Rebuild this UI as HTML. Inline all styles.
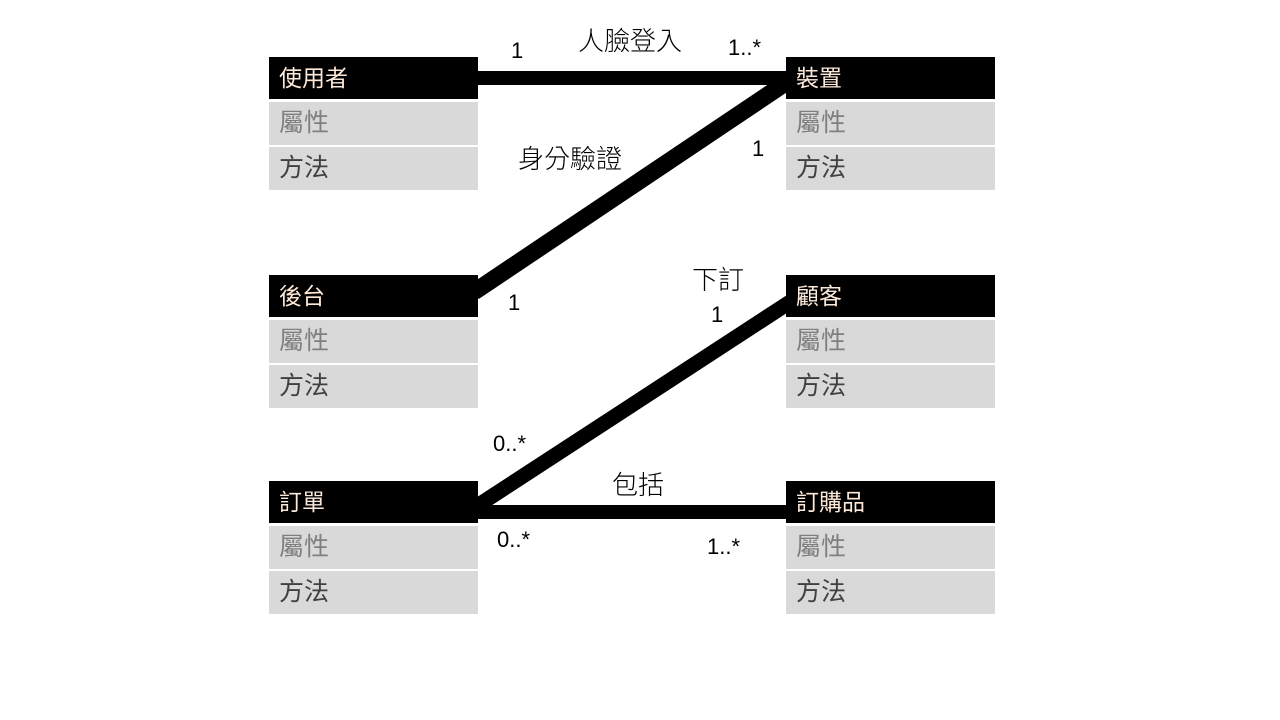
<!DOCTYPE html>
<html><head><meta charset="utf-8"><style>
body{margin:0;width:1280px;height:720px;background:#fff;position:relative;overflow:hidden;font-family:"Liberation Sans","Noto Sans CJK TC",sans-serif}
.b{position:absolute;width:209px}
.h{position:absolute;left:0;width:209px;height:42px;background:#000;color:#fde9d9;font-size:23px;line-height:42px;text-indent:10px}
.a,.m{position:absolute;left:0;width:209px;height:43px;background:#d9d9d9;font-size:25px;line-height:43px;text-indent:10px}
.a{top:45px;color:#7f7f7f}.m{top:90px;color:#404040}
.t{position:absolute;font-size:26px;color:#000;line-height:1;white-space:nowrap;font-weight:300}
.n{position:absolute;font-size:22px;color:#000;line-height:1;white-space:nowrap}
svg{position:absolute;left:0;top:0}
</style></head><body>
<svg width="1280" height="720">
<rect x="478" y="71" width="308" height="14" fill="#000"/>
<line x1="790" y1="80" x2="474" y2="292" stroke="#000" stroke-width="17"/>
<line x1="790" y1="302" x2="474" y2="508" stroke="#000" stroke-width="15"/>
<rect x="478" y="505" width="308" height="14" fill="#000"/>
</svg>
<div class="b" style="left:269px;top:57px"><div class="h">使用者</div><div class="a">屬性</div><div class="m">方法</div></div>
<div class="b" style="left:786px;top:57px"><div class="h">裝置</div><div class="a">屬性</div><div class="m">方法</div></div>
<div class="b" style="left:269px;top:275px"><div class="h">後台</div><div class="a">屬性</div><div class="m">方法</div></div>
<div class="b" style="left:786px;top:275px"><div class="h">顧客</div><div class="a">屬性</div><div class="m">方法</div></div>
<div class="b" style="left:269px;top:481px"><div class="h">訂單</div><div class="a">屬性</div><div class="m">方法</div></div>
<div class="b" style="left:786px;top:481px"><div class="h">訂購品</div><div class="a">屬性</div><div class="m">方法</div></div>
<div class="n" style="left:511px;top:40px">1</div>
<div class="t" style="left:578px;top:28px">人臉登入</div>
<div class="n" style="left:728px;top:37px">1..*</div>
<div class="t" style="left:518px;top:146px">身分驗證</div>
<div class="n" style="left:752px;top:138px">1</div>
<div class="n" style="left:508px;top:292px">1</div>
<div class="t" style="left:692px;top:267px">下訂</div>
<div class="n" style="left:711px;top:304px">1</div>
<div class="n" style="left:493px;top:433px">0..*</div>
<div class="t" style="left:612px;top:472px">包括</div>
<div class="n" style="left:497px;top:529px">0..*</div>
<div class="n" style="left:707px;top:536px">1..*</div>
</body></html>
